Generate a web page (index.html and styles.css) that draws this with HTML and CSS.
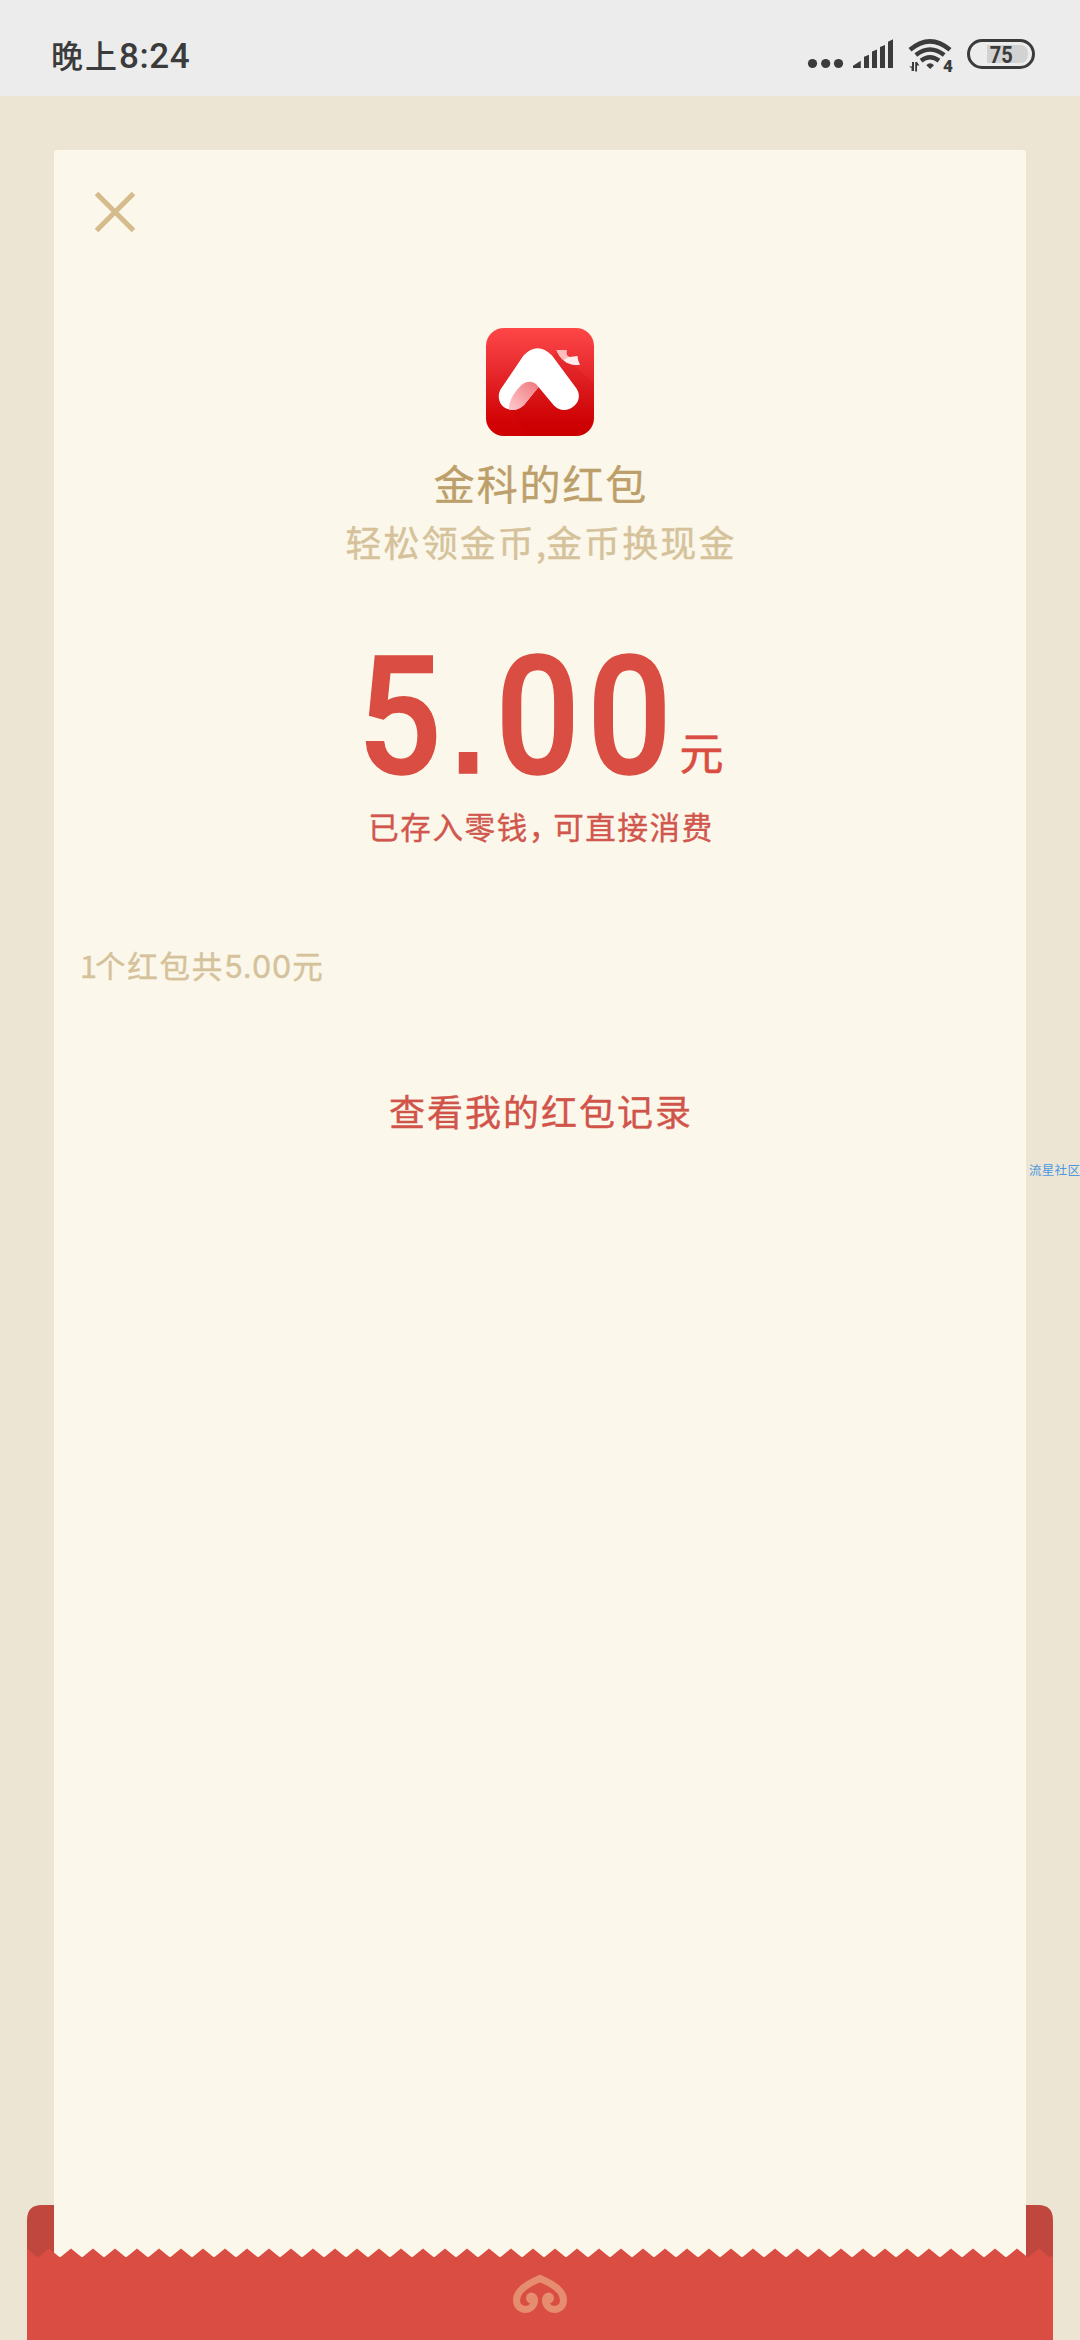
FILE: index.html
```html
<!DOCTYPE html>
<html lang="zh-CN">
<head>
<meta charset="utf-8">
<title>红包</title>
<link rel="stylesheet" href="styles.css">
</head>
<body>
<div class="screen">
  <header class="status">
    <div class="clock"><span>晚上</span><span class="digits">8:24</span></div>
    <svg class="indicators" width="230" height="36" viewBox="806 36 230 36" fill="#3b3b3b">
      <circle cx="812.5" cy="63.5" r="4.6"/><circle cx="825.7" cy="63.5" r="4.6"/><circle cx="838.5" cy="63.5" r="4.6"/>
      <path d="M853 68v-2.2l7.8-5V68zM864 68V56.8l5-2V68zM872 68V51.5l5-2V68zM880 68V47l5-2V68zM888 68V41.7l5-2.4V68z"/>
      <g fill="none" stroke="#3b3b3b" stroke-width="4.5">
        <path d="M910 49.8Q930 32.8 950 49.8"/><path d="M915.8 55Q930 44 944.2 55"/><path d="M921 60.6Q930 54 939 60.6"/>
      </g>
      <path d="M926.3 65.2Q930 61.5 934 65.2L930.2 69z"/>
      <path d="M912 62h2v9h-2.400v-3L909 66.500h3zM915.200 62h1.800l2.400 3.600H917v6h-1.800z"/>
      <text class="net" x="943" y="71.5">4</text>
      <rect x="968.5" y="40.5" width="65" height="27" rx="13.5" fill="none" stroke="#3b3b3b" stroke-width="3"/>
      <path d="M987 45h33q8 0 8 9t-8 9h-33z" fill="#d2d2d2"/>
      <text class="battery" x="989.8" y="62.5" textLength="23" lengthAdjust="spacingAndGlyphs">75</text>
    </svg>
  </header>
  <main class="stage">
    <section class="card">
      <svg class="close" width="40" height="40" viewBox="0 0 40 40"><path d="M1.5 1.5l37 37M38.5 1.5l-37 37" stroke="#d6bc8c" stroke-width="5"/></svg>
      <svg class="logo" width="108" height="108" viewBox="0 0 108 108">
        <defs>
          <linearGradient id="bg" x1="0" y1="0" x2="0" y2="1"><stop offset="0" stop-color="#ff4747"/><stop offset=".3" stop-color="#ec3135"/><stop offset=".85" stop-color="#d30406"/><stop offset="1" stop-color="#cf0000"/></linearGradient>
          <linearGradient id="fold" x1="1" y1="0" x2="0" y2="1"><stop offset="0" stop-color="#ee777c"/><stop offset="1" stop-color="#ffc9ce"/></linearGradient>
        </defs>
        <rect width="108" height="108" rx="18" fill="url(#bg)"/>
        <path d="M72 22L108 56V88Q108 108 88 108H40L25 82z" fill="#b80000" opacity=".12"/>
        <path d="M37.500 27.500Q51.500 13 66 27.500L90.500 60.500C97.500 71 88 82.500 77 82Q71.500 81.500 67.500 77L52.500 59L38 77Q31.500 83 24 81.500C14.500 80 10 70 14.500 61.500Z" fill="#fff"/>
        <path d="M52.500 59L38 77Q31.500 83.500 23 81.500C22.500 74 27 66 34 58.500C39 53 47.500 51.500 52.500 59z" fill="url(#fold)"/>
        <path d="M70.500 22l10 0q-1 6 3 7l8-1q0 4 2.500 8.700C82 39 74 31 70.500 22z" fill="#ffeded"/>
        <path d="M70.500 22l10 0q-1 6 3 7l-6 3q-5-4-7-10z" fill="#ffbcbc"/>
      </svg>
      <h1 class="sender">金科的红包</h1>
      <p class="blessing">轻松领金币<span class="comma-half">,</span>金币换现金</p>
      <svg class="amount" width="400" height="150" viewBox="340 640 400 150">
        <g transform="scale(.9 1)"><text class="number" y="773.5" x="397 501.500 550.500 652.500">5<tspan class="point">.</tspan>00</text></g>
        <text class="unit" x="679.500" y="769.500">元</text>
      </svg>
      <p class="note">已存入零钱<span class="comma">，</span>可直接消费</p>
      <p class="total"><span class="count">1</span>个红包共<span class="figure">5.00</span>元</p>
      <a class="records">查看我的红包记录</a>
    </section>
    <svg class="envelope" width="1026" height="136" viewBox="27 2204 1026 136">
      <defs><pattern id="teeth" x="27" y="2248" width="22" height="10" patternUnits="userSpaceOnUse"><path d="M0 .5L11 9.500L22 .5V10H0z" fill="#d94d42"/></pattern></defs>
      <path d="M27 2260V2220Q27 2205 42 2205H54V2260zM1053 2260V2220Q1053 2205 1038 2205H1026V2260z" fill="#bf473e"/>
      <rect x="27" y="2248" width="1026" height="10" fill="url(#teeth)"/>
      <rect x="27" y="2257" width="1026" height="83" fill="#d94d42"/>
      <g fill="none" stroke="#e68d70" stroke-width="7" stroke-linecap="round">
        <path d="M540 2278.500C529 2283 516.500 2290 516.500 2300C516.500 2313 534.500 2312 534.500 2300Q534.500 2296.500 531.500 2298.500"/>
        <path d="M540 2278.500C551 2283 563.500 2290 563.500 2300C563.500 2313 545.500 2312 545.500 2300Q545.500 2296.500 548.500 2298.500"/>
      </g>
      <circle cx="531.500" cy="2298" r="5.500" fill="#e68d70"/><circle cx="548.500" cy="2298" r="5.500" fill="#e68d70"/>
    </svg>
    <span class="watermark">流星社区</span>
  </main>
</div>
</body>
</html>
```
FILE: styles.css
```css
* { box-sizing: border-box; margin: 0; padding: 0; }
body { font-family: "Noto Sans CJK SC", sans-serif; background: #ece5d3; }
svg { overflow: visible; }
.screen { width: 1080px; height: 2340px; display: flex; flex-direction: column; overflow: hidden; }
.status {
  height: 96px; flex: none; background: #ececec; color: #3b3b3b;
  display: flex; justify-content: space-between; align-items: flex-start;
  padding: 36px 44px 0 51px;
}
.clock { display: flex; align-items: baseline; font-size: 32px; font-weight: 500; line-height: 36px; letter-spacing: 2px; white-space: nowrap; }
.digits { font-family: Roboto, sans-serif; font-size: 35px; font-weight: 500; letter-spacing: .6px; }
.net { font: 900 17px Roboto, sans-serif; }
.battery { font: 700 24px Roboto, sans-serif; }
.stage { flex: 1; position: relative; padding: 54px 54px 0; }
.card {
  height: 2110px; background: #fbf7ea; border-radius: 3px 3px 0 0;
  display: flex; flex-direction: column; align-items: center; padding-top: 42px;
  -webkit-text-stroke: .4px currentColor;
}
.close { align-self: flex-start; margin-left: 41px; }
.logo { margin-top: 96px; }
.sender { margin-top: 18px; padding-left: 2px; font-size: 41px; line-height: 56px; font-weight: 400; letter-spacing: 1.900px; color: #bc9f6a; }
.blessing { margin-top: 6px; padding-left: 2px; font-size: 36px; line-height: 50px; letter-spacing: 2.100px; color: #d5c29b; }
.comma-half { letter-spacing: 0; }
.amount { margin-top: 74px; color: #d94d42; -webkit-text-stroke: 0; }
.number { font: 500 165px Roboto, sans-serif; fill: #d94d42; stroke: #d94d42; stroke-width: 1.5px; }
.point { font: 700 135px "Liberation Sans", sans-serif; }
.unit { font-size: 44px; fill: #d94d42; stroke: #d94d42; stroke-width: .6px; }
.note { margin-top: 15px; padding-left: 2px; font-size: 30.500px; line-height: 42px; letter-spacing: 1.600px; color: #d1574e; }
.comma { letter-spacing: -6px; }
.total { align-self: flex-start; margin: 97px 0 0 26px; font-size: 30.500px; line-height: 42px; letter-spacing: 1.800px; color: #d5c29b; }
.count { letter-spacing: -2px; }
.figure { font-family: Inter, sans-serif; letter-spacing: 1px; }
.records { margin-top: 97px; padding-left: 2px; font-size: 36px; line-height: 50px; letter-spacing: 2px; color: #d1544b; }
.envelope { position: absolute; left: 27px; bottom: 0; }
.watermark { position: absolute; left: 1029px; top: 1065px; font-size: 12.500px; line-height: 18px; letter-spacing: .3px; color: #4a98e2; white-space: nowrap; }
```
